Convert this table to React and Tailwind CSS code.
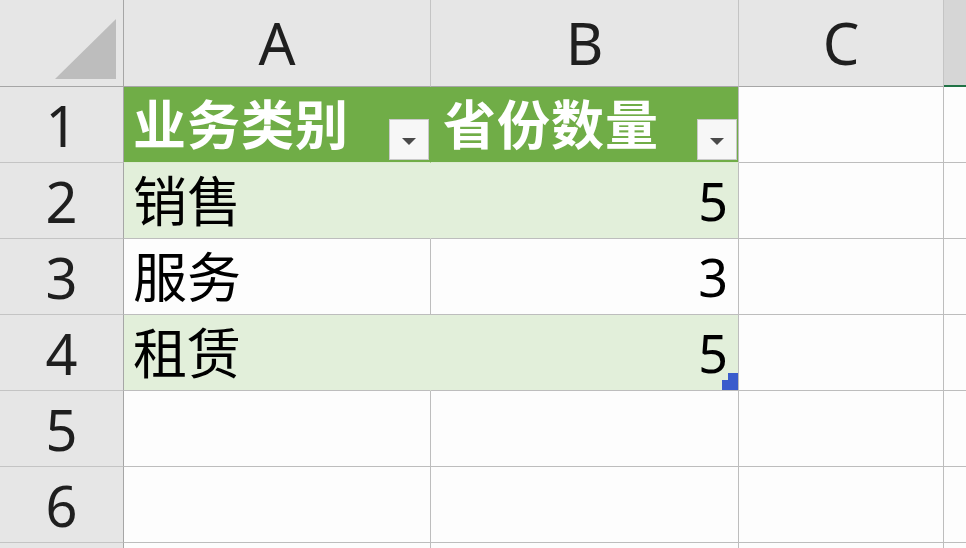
const FONT = { fontFamily: '"Noto Sans", "Noto Sans CJK SC", sans-serif' };

const COLS = ["A", "B", "C", ""];
const ROWS = [
  { n: 1 },
  { n: 2, a: "销售", b: "5", band: true },
  { n: 3, a: "服务", b: "3" },
  { n: 4, a: "租赁", b: "5", band: true, last: true },
  { n: 5 },
  { n: 6 },
  { n: 7, hideLabel: true },
];

function FilterButton() {
  return (
    <div className="w-[40px] h-[41px] bg-[#f7f7f7] border border-[#c9c9c9] flex items-center justify-center">
      <svg width="14" height="8" viewBox="0 0 14 8" className="mt-[4px]">
        <polygon points="0,0 14,0 7,7" fill="#4a4a4a" />
      </svg>
    </div>
  );
}

function TableCell({ row, col }) {
  if (row.n === 1) {
    const label = col === "A" ? "业务类别" : "省份数量";
    return (
      <div
        className={`bg-[#70ad47] border-b border-b-[#dcebd1] flex items-center justify-between ${
          col === "A" ? "pl-[9px] pr-px border-r border-r-[#70ad47]" : "pl-[12px] pr-px border-r border-r-[#bdbdbd]"
        }`}
      >
        <span className="text-white font-bold text-[53px] leading-none tracking-[1px]">{label}</span>
        <div className="self-end mb-[2px]">
          <FilterButton />
        </div>
      </div>
    );
  }
  const bg = row.band ? "bg-[#e2efda]" : "bg-[#fdfdfd]";
  const rb = col === "A" && row.band ? "border-r-[#e2efda]" : "border-r-[#bdbdbd]";
  return (
    <div className={`relative ${bg} border-r ${rb} border-b border-b-[#bdbdbd] flex items-center ${col === "A" ? "pl-[9px]" : "justify-end pr-[10px]"}`}>
      <span className={`leading-none text-black ${col === "A" ? "text-[54px]" : "text-[52px]"}`}>
        {col === "A" ? row.a : row.b}
      </span>
      {row.last && col === "B" && (
        <div className="absolute right-0 bottom-0 w-[16px] h-[17px]">
          <div className="absolute right-0 top-0 w-[10px] h-[8px] bg-[#3a5ccc]" />
          <div className="absolute right-0 bottom-0 w-[16px] h-[10px] bg-[#3a5ccc]" />
        </div>
      )}
    </div>
  );
}

export default function App() {
  return (
    <div className="w-[966px] h-[548px] overflow-hidden bg-white" style={FONT}>
      <div className="grid grid-cols-[124px_307px_308px_205px_1fr] grid-rows-[87px_repeat(7,76px)]">
        <div className="bg-[#e6e6e6] border-r border-b border-[#a6a6a6] flex items-end justify-end pr-[6px] pb-[6px]">
          <svg width="62" height="61" viewBox="0 0 62 61">
            <polygon points="0,60 61,60 61,0" fill="#bdbdbd" />
          </svg>
        </div>
        {COLS.map((c, i) =>
          i === 3 ? (
            <div key="d" className="bg-[#d6d6d6] border-b-[2px] border-b-[#217346]" />
          ) : (
            <div
              key={c}
              className="bg-[#e6e6e6] border-r border-r-[#c4c4c4] border-b border-b-[#a6a6a6] flex items-center justify-center"
            >
              <span className="text-[58px] leading-none text-[#1f1f1f]">{c}</span>
            </div>
          )
        )}

        {ROWS.map((row) => (
          <div key={row.n} className="contents">
            <div className="bg-[#e6e6e6] border-r border-r-[#a6a6a6] border-b border-b-[#c4c4c4] flex items-center justify-center">
              {!row.hideLabel && <span className="text-[56px] leading-none text-[#1f1f1f]">{row.n}</span>}
            </div>
            {row.n <= 4 ? (
              <>
                <TableCell row={row} col="A" />
                <TableCell row={row} col="B" />
              </>
            ) : (
              <>
                <div className="bg-[#fdfdfd] border-r border-b border-[#bdbdbd]" />
                <div className="bg-[#fdfdfd] border-r border-b border-[#bdbdbd]" />
              </>
            )}
            <div className="bg-[#fdfdfd] border-r border-b border-[#bdbdbd]" />
            <div className="bg-[#fdfdfd] border-b border-[#bdbdbd]" />
          </div>
        ))}
      </div>
    </div>
  );
}
